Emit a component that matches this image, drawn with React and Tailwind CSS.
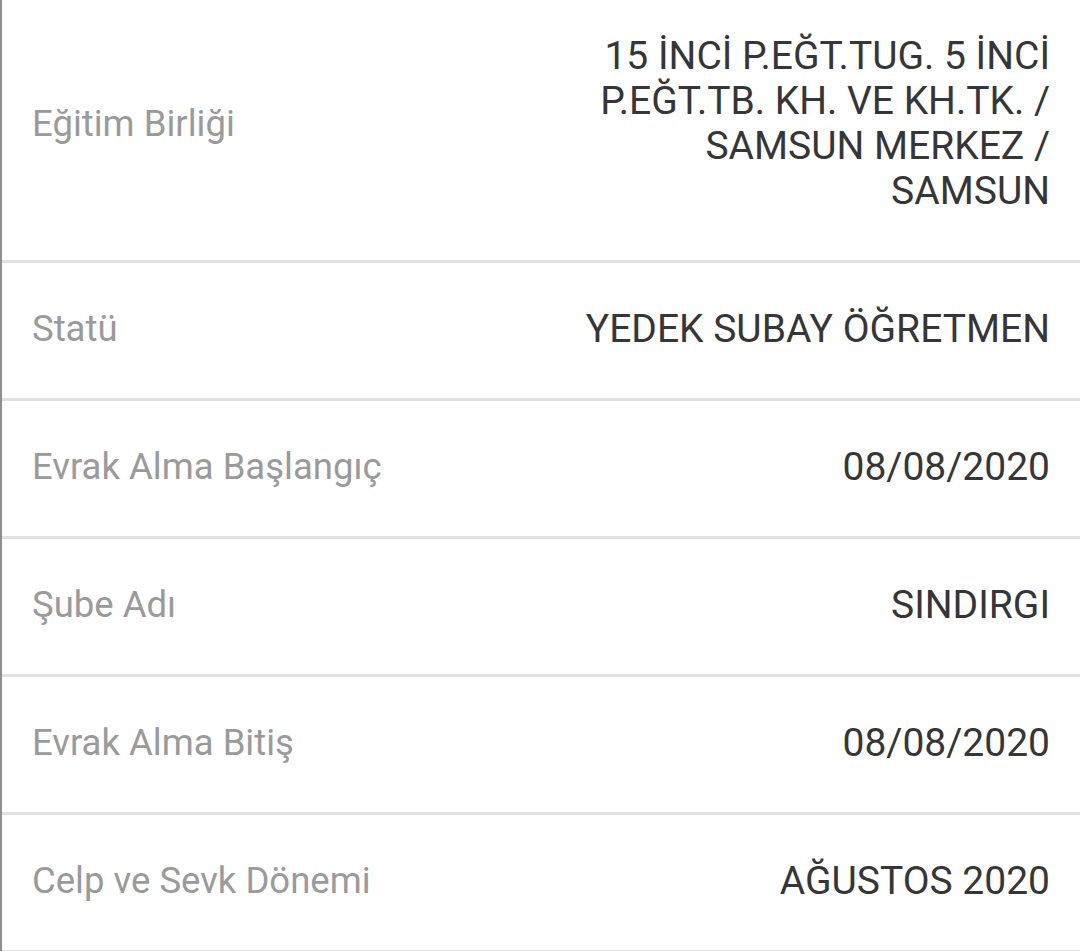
export default function App() {
  const rows = [
    {
      label: 'Eğitim Birliği',
      value: ['15 İNCİ P.EĞT.TUG. 5 İNCİ', 'P.EĞT.TB. KH. VE KH.TK. /', 'SAMSUN MERKEZ /', 'SAMSUN'],
      tall: true,
    },
    { label: 'Statü', value: ['YEDEK SUBAY ÖĞRETMEN'] },
    { label: 'Evrak Alma Başlangıç', value: ['08/08/2020'] },
    { label: 'Şube Adı', value: ['SINDIRGI'] },
    { label: 'Evrak Alma Bitiş', value: ['08/08/2020'] },
    { label: 'Celp ve Sevk Dönemi', value: ['AĞUSTOS 2020'] },
  ];

  return (
    <div className="w-[1080px] h-[951px] overflow-hidden bg-white border-l-2 border-[#8e8e8e] font-['Roboto',sans-serif]">
      {rows.map((row, i) => (
        <div
          key={i}
          className={`flex items-center justify-between border-b-[3px] border-[#e2e2e2] pl-[30px] pr-[30px] ${row.tall ? 'h-[263px] pb-[12px]' : 'h-[138px] pb-[2px]'}`}
        >
          <span className="text-[36.5px] text-[#9a9a9a] whitespace-nowrap">{row.label}</span>
          <div className="text-right text-[39px] leading-[45px] text-[#363636]">
            {row.value.map((line, j) => (
              <div key={j}>{line}</div>
            ))}
          </div>
        </div>
      ))}
    </div>
  );
}
